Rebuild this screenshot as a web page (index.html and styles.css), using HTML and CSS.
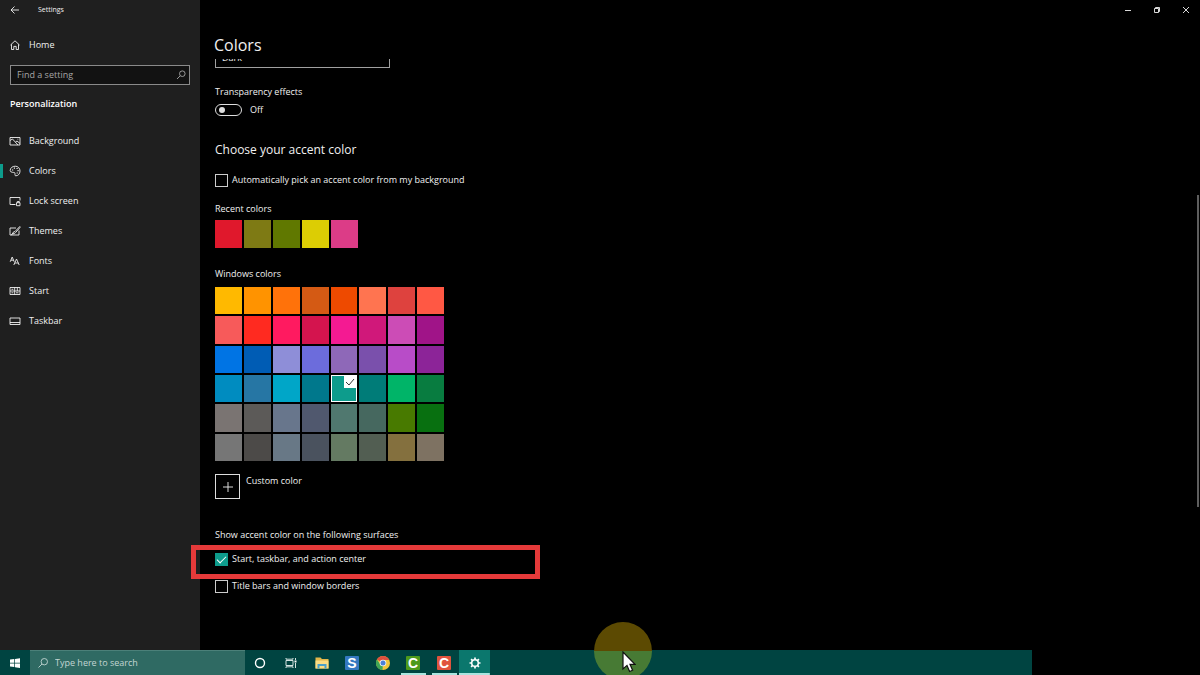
FILE: index.html
```html
<!DOCTYPE html>
<html lang="en">
<head>
  <meta charset="UTF-8" />
  <meta name="viewport" content="width=device-width, initial-scale=1.0">
  <title>Settings</title>
  <link rel="stylesheet" href="styles.css">
</head>
<body>
  <div class="window">
    <aside class="sidebar">
      <div class="app-bar">
        <button type="button" class="icon-btn" aria-label="Back">
          <svg class="icon" viewBox="0 0 12 12"><path d="M10 6H2M5.500 2.500L2 6l3.500 3.500"/></svg>
        </button>
        <span>Settings</span>
      </div>
      <a href="#" class="nav-link home">
        <svg class="icon" viewBox="0 0 12 12"><path d="M1.500 6L6 1.800 10.500 6M2.500 5.300v5.200h2.300V7.400h2.400v3.100h2.300V5.300"/></svg>
        Home
      </a>
      <div class="search">
        <input type="text" placeholder="Find a setting" aria-label="Find a setting">
        <svg class="icon" viewBox="0 0 12 12"><circle cx="7.300" cy="4.700" r="2.800"/><path d="M5.200 6.800L2 10"/></svg>
      </div>
      <h2>Personalization</h2>
      <nav>
        <a href="#" class="nav-link">
          <svg class="icon" viewBox="0 0 12 12"><path d="M1 2.500h10v7.500H1zM1 5.500l2.500-1.500L9 10M6.500 7L8 6l3 2.500M8.500 4.200h.8"/></svg>
          Background
        </a>
        <a href="#" class="nav-link active">
          <svg class="icon" viewBox="0 0 12 12"><path d="M1.200 5.500C1.200 3 3.400 1.200 6.200 1.200S11 3.200 11 6s-1.800 4.800-4.200 4.800c-1.600 0-.3-2.200-1-3S1.200 8 1.200 5.500z"/><path d="M3 5h1.200M4.800 3.200H6M7.500 3.500h1.200M8.500 5.700h1.200M7.600 8h1.200" stroke-width="1.200"/></svg>
          Colors
        </a>
        <a href="#" class="nav-link">
          <svg class="icon" viewBox="0 0 12 12"><path d="M6.500 9.500H1v-7h10v3M3 9.500h3M7.500 7.700h3.500v3H7.500zM8.300 7.700V6.500h2v1.200"/></svg>
          Lock screen
        </a>
        <a href="#" class="nav-link">
          <svg class="icon" viewBox="0 0 12 12"><path d="M7 3H1v7h9V5.500M10.800 1.500L6 6.500 4.200 7.200 3.500 9l2-.4L6.800 7.300 11 2.500zM2 10l2.500-1.800"/></svg>
          Themes
        </a>
        <a href="#" class="nav-link">
          <svg class="icon" viewBox="0 0 12 12"><path d="M1.200 6.800L3.200 2l2 4.800M2 5.200h2.500M4.800 10L7.500 4l2.700 6M5.700 8h3.600"/></svg>
          Fonts
        </a>
        <a href="#" class="nav-link">
          <svg class="icon" viewBox="0 0 12 12"><path d="M1 2.500h10v7H1zM1 6h10M5.700 2.500v7M2.500 4.300h1.800M2.500 7.800h1.800M8.300 2.500V6M7 7.800h2.500"/></svg>
          Start
        </a>
        <a href="#" class="nav-link">
          <svg class="icon" viewBox="0 0 12 12"><path d="M1 3h10v6.500H1zM1 7.500h10"/></svg>
          Taskbar
        </a>
      </nav>
    </aside>

    <main class="content">
      <div class="window-controls">
        <button type="button" class="icon-btn" aria-label="Minimize">
          <svg class="icon" viewBox="0 0 12 12"><path d="M3 6.500h6"/></svg>
        </button>
        <button type="button" class="icon-btn" aria-label="Restore">
          <svg class="icon" viewBox="0 0 12 12"><path d="M3.500 4.500h4v4h-4zM4.500 4.500v-1h4v4h-1"/></svg>
        </button>
        <button type="button" class="icon-btn" aria-label="Close">
          <svg class="icon" viewBox="0 0 12 12"><path d="M3 3l6 6M9 3L3 9"/></svg>
        </button>
      </div>
      <h1>Colors</h1>

      <div class="settings">
        <div class="mode">
          <select aria-label="Choose your color">
            <option>Dark</option>
            <option>Light</option>
          </select>
        </div>

        <p class="transparency" id="transparency">Transparency effects</p>
        <label class="row toggle">
          <input type="checkbox" role="switch" aria-labelledby="transparency">
          <span>Off</span>
        </label>

        <h3>Choose your accent color</h3>
        <label class="row auto-pick">
          <input type="checkbox" class="box">
          Automatically pick an accent color from my background
        </label>

        <p class="recent-title">Recent colors</p>
        <div class="recent" id="recent"></div>

        <p class="palette-title">Windows colors</p>
        <div class="palette" id="palette"></div>

        <div class="custom">
          <button type="button" id="custom" aria-labelledby="customLabel">
            <svg class="icon" viewBox="0 0 12 12"><path d="M6 1v10M1 6h10"/></svg>
          </button>
          <label for="custom" id="customLabel">Custom color</label>
        </div>

        <p class="surfaces-title">Show accent color on the following surfaces</p>
        <div class="marked">
          <label class="row">
            <input type="checkbox" class="box" checked>
            Start, taskbar, and action center
          </label>
        </div>
        <label class="row title-bars">
          <input type="checkbox" class="box">
          Title bars and window borders
        </label>
      </div>
      <div class="scroll-thumb"></div>
    </main>
  </div>

  <footer class="taskbar">
    <button type="button" class="start" aria-label="Start">
      <svg viewBox="0 0 12 12"><path d="M1 2.600l4.300-.6v3.700H1zM6 1.900l5-.7v4.500H6zM1 6.400h4.300v3.700L1 9.500zM6 6.400h5v4.500l-5-.7z" fill="#fff"/></svg>
    </button>
    <div class="task-search">
      <svg class="icon" viewBox="0 0 12 12"><circle cx="7.300" cy="4.700" r="3.200"/><path d="M5 7L1.500 10.500"/></svg>
      <input type="text" placeholder="Type here to search" aria-label="Type here to search">
    </div>
    <div class="apps">
      <button type="button" aria-label="Cortana">
        <svg viewBox="0 0 16 16"><circle cx="8" cy="8" r="4.500" fill="none" stroke="#fff" stroke-width="1.400"/></svg>
      </button>
      <button type="button" aria-label="Task view">
        <svg viewBox="0 0 16 16" fill="none" stroke="#d5e4e2"><path d="M3 5.500h7v5H3zM3 3v1.200h7V3M3 13v-1.200h7V13M12.500 3v2M12.500 8v5"/><path d="M12.500 5.500V7.500" stroke="#fff" stroke-width="2"/></svg>
      </button>
      <button type="button" aria-label="File Explorer">
        <svg viewBox="0 0 16 16"><path d="M1.500 2.500h5L8 4h6.500v9.500h-13z" fill="#e2b64a"/><path d="M1.500 5.500h13v8h-13z" fill="#fbdc83"/><path d="M3.500 9h9v4.500h-2V11h-5v2.500h-2z" fill="#4a9fc9"/></svg>
      </button>
      <button type="button" aria-label="Snagit">
        <svg viewBox="0 0 16 16"><rect x="1" y="1" width="14" height="14" rx="1" fill="#3478c0"/><text x="8" y="13" class="logo">S</text></svg>
      </button>
      <button type="button" aria-label="Chrome">
        <svg viewBox="0 0 16 16"><circle cx="8" cy="8" r="7" fill="#f0c63c"/><path d="M8 8L1.900 4.500A7 7 0 0 1 14.100 4.500L14.300 5H8z" fill="#dd4f3e"/><path d="M8 8L7.500 15A7 7 0 0 1 1.900 4.500l3.500 5z" fill="#3fa656"/><circle cx="8" cy="8" r="3.300" fill="#f5f5f5"/><circle cx="8" cy="8" r="2.500" fill="#4a80d8"/></svg>
      </button>
      <button type="button" class="running" aria-label="Camtasia">
        <svg viewBox="0 0 16 16"><rect x="1" y="1" width="14" height="14" rx="1" fill="#4e9a1c"/><text x="8" y="13" class="logo">C</text></svg>
      </button>
      <button type="button" class="running" aria-label="Camtasia Recorder">
        <svg viewBox="0 0 16 16"><rect x="1" y="1" width="14" height="14" rx="1" fill="#e0543e"/><text x="8" y="13" class="logo">C</text></svg>
      </button>
      <button type="button" class="running current" aria-label="Settings">
        <svg viewBox="0 0 16 16" fill="none" stroke="#fff"><circle cx="8" cy="8" r="3.300" stroke-width="1.500"/><path d="M8 2.500v2M8 11.500v2M2.500 8h2M11.500 8h2M4.100 4.100l1.400 1.400M10.500 10.500l1.400 1.400M4.100 11.900l1.400-1.400M10.500 5.500l1.400-1.400" stroke-width="1.700"/></svg>
      </button>
    </div>
  </footer>

  <div class="pointer">
    <svg viewBox="0 0 14 22"><path d="M1 1v17l4-3.600L7.600 20.500l3-1.300L8 13.300h5z" fill="#fff" stroke="#111" stroke-width="1.200"/></svg>
  </div>

  <script src="script.js"></script>
</body>
</html>
```

FILE: styles.css
```css
:root {
  --accent: #0d9c8c;
  --sidebar-bg: #1f1f1f;
  --taskbar-bg: #004441;
  --text: #f0f0f0;
  --mark: #e53a3a;
}

*,
*::before,
*::after {
  margin: 0;
  padding: 0;
  box-sizing: border-box;
}

body {
  display: flex;
  flex-direction: column;
  height: 100vh;
  overflow: hidden;
  background-color: #000;
  color: var(--text);
  font-family: "Open Sans", "Noto Sans", sans-serif;
  font-size: 9px;
  line-height: 14px;
}

input,
select,
button {
  font: inherit;
  color: inherit;
  background: none;
  border: none;
  border-radius: 0;
  outline: none;
  appearance: none;
}

button {
  display: flex;
  align-items: center;
  justify-content: center;
}

.icon {
  flex: none;
  width: 12px;
  height: 12px;
  fill: none;
  stroke: currentColor;
  stroke-width: 0.9;
}

.window {
  flex: 1;
  display: flex;
  min-height: 0;
}

/* sidebar */
.sidebar {
  flex: none;
  width: 200px;
  background-color: var(--sidebar-bg);
}

.app-bar {
  display: flex;
  align-items: center;
  gap: 17px;
  height: 20px;
  padding-left: 9px;
  font-size: 7px;
}

.nav-link {
  display: flex;
  align-items: center;
  gap: 8px;
  height: 30px;
  padding-left: 9px;
  color: var(--text);
  text-decoration: none;
}

.home {
  margin: 10px 0 5px;
}

.search {
  display: flex;
  align-items: center;
  height: 20px;
  margin: 0 10px;
  padding: 0 2px 0 6px;
  border: 1px solid #8a8a8a;
  background-color: #121212;
  color: #a6a6a6;
}

.search input {
  flex: 1;
  min-width: 0;
}

::placeholder {
  color: inherit;
  opacity: 1;
}

h2 {
  margin: 12px 10px 15px;
  font-size: 9px;
  font-weight: 600;
  line-height: 14px;
  color: #fff;
}

.active {
  background: linear-gradient(var(--accent), var(--accent)) no-repeat 0 50% / 3px 14px;
}

/* content */
.content {
  position: relative;
  flex: 1;
  min-width: 0;
}

.window-controls {
  display: flex;
  justify-content: flex-end;
  gap: 17px;
  height: 20px;
  padding-right: 8px;
}

h1 {
  margin: 13px 14px 2px;
  font-size: 16px;
  font-weight: 400;
  line-height: 24px;
}

.settings {
  padding-left: 15px;
}

/* scrolled under the page title */
.mode {
  display: flex;
  align-items: flex-end;
  height: 9px;
  overflow: hidden;
}

.mode select {
  flex: none;
  width: 175px;
  height: 22px;
  padding: 2px 6px 0;
  border: 1px solid #a0a0a0;
}

.transparency {
  margin: 17px 0 4px;
}

.row {
  display: flex;
  align-items: center;
  gap: 4px;
  width: max-content;
  height: 14px;
}

.toggle {
  gap: 8px;
}

.toggle input {
  width: 27px;
  height: 12px;
  border: 1px solid #ddd;
  border-radius: 6px;
}

.toggle input::before {
  content: "";
  display: block;
  width: 6px;
  height: 6px;
  margin: 2px 3px;
  border-radius: 50%;
  background-color: #ddd;
}

h3 {
  margin: 24px 0 14px;
  font-size: 12px;
  font-weight: 400;
  line-height: 18px;
}

.box {
  width: 13px;
  height: 13px;
  border: 1px solid #ccc;
}

.box:checked {
  border-color: var(--accent);
  background-color: var(--accent);
}

.box:checked::before {
  content: "";
  display: block;
  width: 9px;
  height: 5px;
  margin: 2px 1px;
  border: solid #fff;
  border-width: 0 0 1px 1px;
  transform: rotate(-45deg);
}

.recent-title {
  margin: 15px 0 4px;
}

.recent,
.palette {
  display: grid;
  gap: 2px;
}

.recent {
  grid-template-columns: repeat(5, 1fr);
  width: 143px;
  height: 28px;
}

.palette-title {
  margin: 19px 0 6px;
}

.palette {
  grid-template-columns: repeat(8, 1fr);
  grid-template-rows: repeat(6, 1fr);
  width: 229px;
  height: 174px;
}

.swatch.selected {
  align-items: flex-start;
  justify-content: flex-end;
  border: 1px solid #fff;
}

.selected .icon {
  background-color: #fff;
  stroke: #222;
}

.custom {
  display: flex;
  gap: 6px;
  margin: 13px 0 29px;
}

.custom button {
  width: 25px;
  height: 25px;
  border: 1px solid #ddd;
}

.surfaces-title {
  margin-bottom: 10px;
}

/* red frame drawn over the row and the sidebar edge */
.marked {
  position: relative;
}

.marked::after {
  content: "";
  position: absolute;
  top: -7px;
  left: -24px;
  width: 349px;
  height: 34px;
  border: 5px solid var(--mark);
}

.title-bars {
  margin-top: 13px;
}

.scroll-thumb {
  position: absolute;
  top: 30%;
  right: 1px;
  width: 2px;
  height: 48%;
  background-color: #5e5e5e;
}

/* taskbar */
.taskbar {
  flex: none;
  display: flex;
  width: 86%;
  height: 25px;
  background-color: var(--taskbar-bg);
}

.start {
  width: 30px;
}

.start svg {
  width: 12px;
  height: 12px;
}

.task-search {
  display: flex;
  align-items: center;
  gap: 6px;
  width: 215px;
  padding-left: 7px;
  border-top: 1px solid #4b8079;
  background-color: #2f6a63;
  color: #c3d6d3;
}

.task-search input {
  flex: 1;
  min-width: 0;
}

.apps {
  display: flex;
  width: 245px;
}

.apps button {
  flex: 1;
}

.apps svg {
  width: 16px;
  height: 16px;
}

.running {
  background: linear-gradient(#a9e5df, #a9e5df) no-repeat 50% 100% / 25px 2px;
}

.current {
  background-color: #0b776d;
  background-size: 100% 2px;
}

.logo {
  fill: #fff;
  font-family: "Liberation Sans", sans-serif;
  font-size: 14px;
  font-weight: 700;
  text-anchor: middle;
}

/* mouse pointer with its highlight */
.pointer {
  position: absolute;
  left: 594px;
  bottom: -5px;
  width: 58px;
  height: 58px;
  padding: 29px 0 0 28px;
  border-radius: 50%;
  background: linear-gradient(#5c4a02 50%, #477a34 50%);
}

.pointer svg {
  width: 14px;
  height: 22px;
}
```

FILE: script.js
```javascript
const recentColors = ['#e0182c', '#7e7a14', '#607800', '#dccd04', '#dc3c87'];

const windowsColors = [
  '#ffb900', '#ff9300', '#ff720a', '#d45a14', '#ee4a00', '#ff7450', '#de423e', '#ff5844',
  '#f75a5a', '#ff2a20', '#ff1a60', '#d4144e', '#f41a92', '#d0187a', '#cc4cb6', '#a01488',
  '#0074e4', '#005cb4', '#8e8ed8', '#6c6cdc', '#8e68b8', '#7a50ac', '#b84cc8', '#8c2498',
  '#008cc0', '#2676a4', '#00a6c8', '#00788c', '#0d9c8c', '#007c78', '#00b468', '#087c40',
  '#7a7472', '#5c5a58', '#68768c', '#50586e', '#50786f', '#46685f', '#487a00', '#087010',
  '#767676', '#4c4a48', '#687886', '#4a525e', '#647a62', '#525e52', '#84703e', '#7e7262',
];

const checkIcon = '<svg class="icon" viewBox="0 0 12 12"><path d="M2 6l3 3 5-6"/></svg>';

function addSwatches(id, colors, selected) {
  const container = document.getElementById(id);
  colors.forEach((color, i) => {
    const btn = document.createElement('button');
    btn.type = 'button';
    btn.className = 'swatch';
    btn.style.backgroundColor = color;
    btn.setAttribute('aria-label', color);
    if (i === selected) {
      btn.classList.add('selected');
      btn.innerHTML = checkIcon;
    }
    container.appendChild(btn);
  });
}

addSwatches('recent', recentColors);
addSwatches('palette', windowsColors, 28);
```
